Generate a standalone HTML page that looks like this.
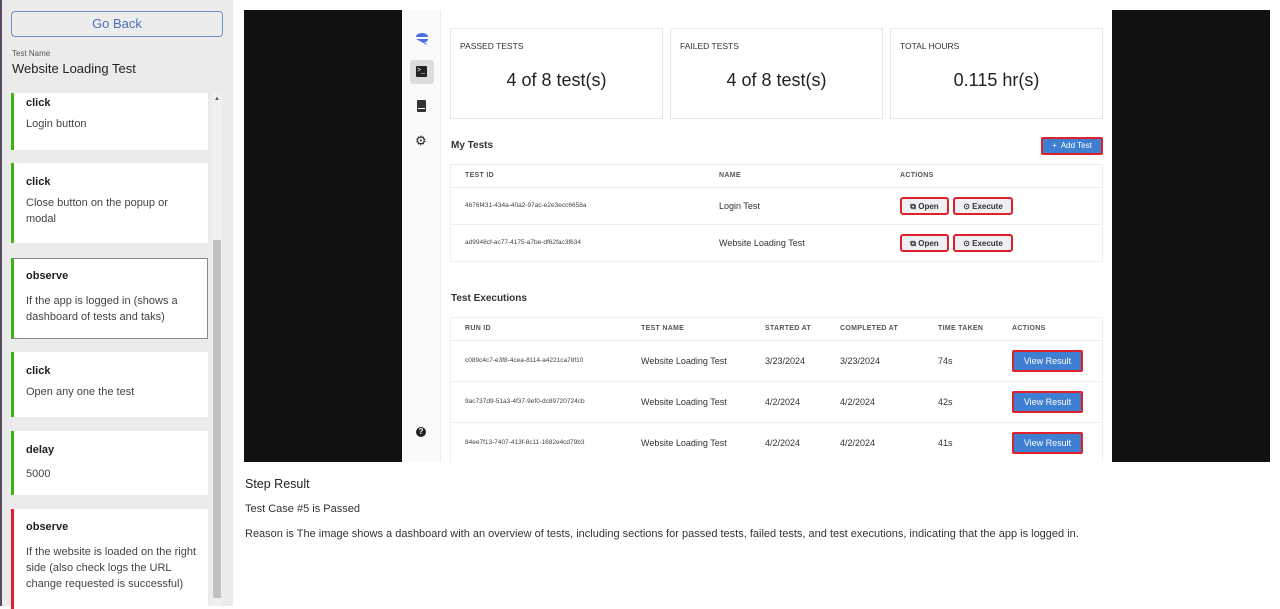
<!DOCTYPE html>
<html><head><style>
*{box-sizing:border-box;margin:0;padding:0}
body{width:1280px;height:606px;overflow:hidden;font-family:"Liberation Sans",sans-serif;background:#fff;position:relative;color:#222}
.abs{position:absolute}
#left{left:0;top:0;width:233px;height:606px;background:#ebebeb;border-left:2px solid #5a4a5e}
.goback{left:11px;top:11px;width:212px;height:26px;border:1px solid #6f8fc9;border-radius:4px;color:#4a6fb5;font-size:13px;text-align:center;line-height:24px;background:#ececec}
.card{left:11px;width:197px;background:#fff;border-left:3px solid #3cb310;padding:0 22px 0 12px}
.card b{display:block;font-size:11px;color:#222;margin-top:8px}
.card p{font-size:11px;color:#444;line-height:16px;margin-top:7px}
.btn{position:absolute;border:2px solid #e0202a;border-radius:3px;background:#eef0f3;font-size:8px;font-weight:bold;color:#333;text-align:center;line-height:15px}
.vr{position:absolute;left:1012px;width:71px;height:22px;background:#3e7fd1;border:2px solid #e0202a;border-radius:2px;color:#fff;font-size:9px;text-align:center;line-height:18px}
.hd{position:absolute;font-size:7px;font-weight:bold;color:#555;letter-spacing:.3px}
.cell{position:absolute;font-size:9px;color:#333}
.id{position:absolute;font-size:6.5px;color:#444}
.stat{position:absolute;top:28px;height:91px;border:1px solid #e6e6e6;background:#fff}
.stat .l{position:absolute;left:9px;top:12px;font-size:8.5px;color:#333}
.stat .v{position:absolute;left:0;right:0;top:41px;text-align:center;font-size:18px;color:#222}
</style></head><body>
<div id="left" class="abs">
<div class="abs goback" style="left:9px">Go Back</div>
<div class="abs" style="left:10px;top:49px;font-size:8px;color:#555">Test Name</div>
<div class="abs" style="left:10px;top:61px;font-size:13px;color:#222">Website Loading Test</div>
</div>
<div class="abs card" style="top:93px;height:57px"><b style="margin-top:4px">click</b><p>Login button</p></div>
<div class="abs card" style="top:163px;height:80px"><b style="margin-top:13px">click</b><p>Close button on the popup or modal</p></div>
<div class="abs card" style="top:258px;height:81px;border-top:1px solid #888;border-right:1px solid #888;border-bottom:1px solid #888"><b style="margin-top:11px">observe</b><p style="margin-top:11px">If the app is logged in (shows a dashboard of tests and taks)</p></div>
<div class="abs card" style="top:352px;height:65px"><b style="margin-top:13px">click</b><p>Open any one the test</p></div>
<div class="abs card" style="top:431px;height:64px"><b style="margin-top:13px">delay</b><p style="margin-top:10px">5000</p></div>
<div class="abs card" style="top:509px;height:100px;border-left-color:#e0202a;padding-right:6px"><b style="margin-top:12px">observe</b><p style="margin-top:11px">If the website is loaded on the right side (also check logs the URL change requested is successful)</p></div>
<div class="abs" style="left:212px;top:93px;width:10px;height:513px;background:#f0f0f0"></div>
<div class="abs" style="left:213px;top:240px;width:8px;height:358px;background:#c1c1c1"></div>
<div class="abs" style="left:214px;top:96px;font-size:6px;color:#555">▲</div>

<div class="abs" style="left:244px;top:10px;width:1026px;height:452px;background:#111"></div>
<div class="abs" style="left:402px;top:10px;width:710px;height:452px;background:#fff"></div>
<div class="abs" style="left:402px;top:10px;width:39px;height:452px;background:#fafafa;border-right:1px solid #eee"></div>
<svg class="abs" style="left:414px;top:31px" width="16" height="16" viewBox="0 0 16 16"><path d="M2 6a6 4 0 0 1 12 0H2z M2 8h12a6 4 0 0 1-6 4h4l1 2" fill="#4a6fe0"/></svg>
<div class="abs" style="left:410px;top:60px;width:24px;height:24px;background:#ddd;border-radius:3px"></div>
<div class="abs" style="left:416px;top:66px;width:11px;height:11px;background:#222;border-radius:1px;color:#fff;font-size:7px;line-height:10px;padding-left:1px">&gt;_</div>
<div class="abs" style="left:417px;top:100px;width:9px;height:12px;background:#333;border-radius:1px"></div>
<div class="abs" style="left:418px;top:108px;width:7px;height:1px;background:#fff"></div>
<div class="abs" style="left:415px;top:133px;font-size:13px;color:#222">⚙</div>
<div class="abs" style="left:416px;top:427px;width:10px;height:10px;border-radius:50%;background:#222;color:#fff;font-size:8px;font-weight:bold;text-align:center;line-height:10px">?</div>

<div class="stat" style="left:450px;width:213px"><div class="l">PASSED TESTS</div><div class="v">4 of 8 test(s)</div></div>
<div class="stat" style="left:670px;width:213px"><div class="l">FAILED TESTS</div><div class="v">4 of 8 test(s)</div></div>
<div class="stat" style="left:890px;width:213px"><div class="l">TOTAL HOURS</div><div class="v">0.115 hr(s)</div></div>

<div class="abs" style="left:451px;top:140px;font-size:10px;font-weight:bold;color:#333">My Tests</div>
<div class="abs" style="left:1041px;top:137px;width:62px;height:18px;background:#3e7fd1;border:2px solid #e0202a;border-radius:2px;color:#fff;font-size:8px;text-align:center;line-height:14px">+&nbsp; Add Test</div>
<div class="abs" style="left:450px;top:164px;width:653px;height:98px;border:1px solid #eee"></div>
<div class="abs" style="left:451px;top:187px;width:651px;height:1px;background:#eee"></div>
<div class="abs" style="left:451px;top:224px;width:651px;height:1px;background:#eee"></div>
<div class="hd" style="left:465px;top:172px">TEST ID</div>
<div class="hd" style="left:719px;top:172px">NAME</div>
<div class="hd" style="left:900px;top:172px">ACTIONS</div>
<div class="id" style="left:465px;top:202px">4676f431-434a-40a2-97ac-e2e3ecc6658a</div>
<div class="cell" style="left:719px;top:201px">Login Test</div>
<div class="id" style="left:465px;top:239px">ad9948cf-ac77-4175-a7be-df62fac3f634</div>
<div class="cell" style="left:719px;top:238px">Website Loading Test</div>
<div class="btn" style="left:900px;top:197px;width:49px;height:18px">⧉ Open</div>
<div class="btn" style="left:953px;top:197px;width:60px;height:18px">⊙ Execute</div>
<div class="btn" style="left:900px;top:234px;width:49px;height:18px">⧉ Open</div>
<div class="btn" style="left:953px;top:234px;width:60px;height:18px">⊙ Execute</div>

<div class="abs" style="left:451px;top:293px;font-size:10px;font-weight:bold;color:#333">Test Executions</div>
<div class="abs" style="left:450px;top:317px;width:653px;height:150px;border:1px solid #eee"></div>
<div class="abs" style="left:451px;top:340px;width:651px;height:1px;background:#eee"></div>
<div class="abs" style="left:451px;top:381px;width:651px;height:1px;background:#eee"></div>
<div class="abs" style="left:451px;top:422px;width:651px;height:1px;background:#eee"></div>
<div class="hd" style="left:465px;top:325px">RUN ID</div>
<div class="hd" style="left:641px;top:325px">TEST NAME</div>
<div class="hd" style="left:765px;top:325px">STARTED AT</div>
<div class="hd" style="left:840px;top:325px">COMPLETED AT</div>
<div class="hd" style="left:938px;top:325px">TIME TAKEN</div>
<div class="hd" style="left:1012px;top:325px">ACTIONS</div>
<div class="id" style="left:465px;top:357px">c089c4c7-e3f8-4cea-8114-a4221ca78f10</div>
<div class="cell" style="left:641px;top:356px">Website Loading Test</div>
<div class="cell" style="left:765px;top:356px">3/23/2024</div>
<div class="cell" style="left:840px;top:356px">3/23/2024</div>
<div class="cell" style="left:938px;top:356px">74s</div>
<div class="vr" style="top:350px">View Result</div>
<div class="id" style="left:465px;top:398px">9ac737d9-51a3-4f37-9ef0-dc89720724cb</div>
<div class="cell" style="left:641px;top:397px">Website Loading Test</div>
<div class="cell" style="left:765px;top:397px">4/2/2024</div>
<div class="cell" style="left:840px;top:397px">4/2/2024</div>
<div class="cell" style="left:938px;top:397px">42s</div>
<div class="vr" style="top:391px">View Result</div>
<div class="id" style="left:465px;top:439px">84ee7f13-7407-413f-8c11-1682e4cd79b3</div>
<div class="cell" style="left:641px;top:438px">Website Loading Test</div>
<div class="cell" style="left:765px;top:438px">4/2/2024</div>
<div class="cell" style="left:840px;top:438px">4/2/2024</div>
<div class="cell" style="left:938px;top:438px">41s</div>
<div class="vr" style="top:432px">View Result</div>
<div class="abs" style="left:1112px;top:10px;width:158px;height:452px;background:#111"></div>
<div class="abs" style="left:244px;top:462px;width:1030px;height:10px;background:#fff"></div>

<div class="abs" style="left:245px;top:477px;font-size:12.5px;color:#222">Step Result</div>
<div class="abs" style="left:245px;top:503px;font-size:11px;color:#333">Test Case #5 is Passed</div>
<div class="abs" style="left:245px;top:528px;font-size:11px;color:#333">Reason is The image shows a dashboard with an overview of tests, including sections for passed tests, failed tests, and test executions, indicating that the app is logged in.</div>
</body></html>
